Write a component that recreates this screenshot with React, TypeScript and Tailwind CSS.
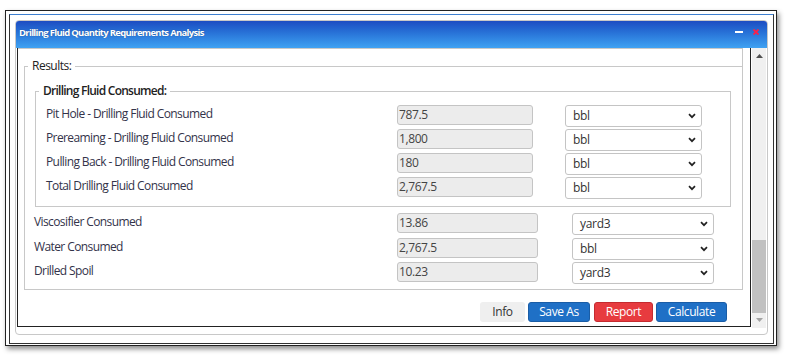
import React from "react";

function Chevron() {
  return (
    <svg width="8" height="6" viewBox="0 0 8 6" className="shrink-0">
      <path d="M1 1.2 L4 4.2 L7 1.2" fill="none" stroke="#222" strokeWidth="1.7" />
    </svg>
  );
}

function ValueBox({ value, w }: { value: string; w: string }) {
  return (
    <div className={`${w} h-[20px] shrink-0 rounded-[3px] border border-[#c4c4c4] bg-[#ececec] pl-[1px] text-[12px] leading-[17px] text-[#444] tracking-[-0.4px]`}>
      {value}
    </div>
  );
}

function UnitBox({ unit, w }: { unit: string; w: string }) {
  return (
    <div className={`${w} h-[22px] shrink-0 rounded-[3px] border border-[#c4c4c4] bg-white pl-[7px] pr-[5px] flex items-center justify-between text-[12px] text-[#333] tracking-[-0.3px]`}>
      <span className="leading-[18px]">{unit}</span>
      <Chevron />
    </div>
  );
}

function InnerRow({ label, value, unit }: { label: string; value: string; unit: string }) {
  return (
    <div className="flex items-start h-[24px]">
      <div className="w-[351px] shrink-0 h-[20px] leading-[18px] text-[12px] text-[#33334a] tracking-[-0.6px]">{label}</div>
      <ValueBox value={value} w="w-[136px]" />
      <div className="w-[32px] shrink-0" />
      <UnitBox unit={unit} w="w-[137px]" />
    </div>
  );
}

function OuterRow({ label, value, unit, h }: { label: string; value: string; unit: string; h: string }) {
  return (
    <div className={`flex items-start ${h}`}>
      <div className="w-[363px] shrink-0 h-[20px] leading-[18px] text-[12px] text-[#33334a] tracking-[-0.6px]">{label}</div>
      <ValueBox value={value} w="w-[141px]" />
      <div className="w-[34px] shrink-0" />
      <UnitBox unit={unit} w="w-[142px]" />
    </div>
  );
}

function Btn({ children, cls }: { children: React.ReactNode; cls: string }) {
  return (
    <div className={`h-[20px] rounded-[3px] flex items-center justify-center text-[12px] tracking-[-0.4px] ${cls}`}>
      {children}
    </div>
  );
}

export default function App() {
  return (
    <div className="w-[787px] h-[357px] bg-white font-['Open_Sans',sans-serif] pt-[10px] pl-[5px]">
      <div className="w-[772px] h-[336px] border border-[#222] pt-[3px] pl-[3px] pr-[2px] pb-[1px] shadow-[2px_3px_5px_rgba(0,0,0,0.45)] bg-white">
        <div className="h-full border border-[#333] border-t-[#3d7fd0] pl-[5px] pt-[5px]">
          <div className="w-[753px] h-[315px] border border-[#c8c8c8] rounded-[4px] bg-white flex flex-col">
            {/* header */}
            <div className="h-[27px] shrink-0 rounded-t-[3px] bg-linear-to-b from-[#1d4cc2] to-[#40a2f2] flex items-start justify-between pl-[3px] pr-[8px] pt-[5px]">
              <span className="text-white font-bold text-[9.5px] leading-[14px] tracking-[-0.7px] [text-shadow:0_0_1px_rgba(0,0,0,0.4)]">
                Drilling Fluid Quantity Requirements Analysis
              </span>
              <div className="flex items-center gap-[10px] pt-[3px]">
                <div className="w-[8px] h-[2px] bg-white" />
                <svg width="6" height="6" viewBox="0 0 6 6">
                  <path d="M0.5 0.5 L5.5 5.5 M5.5 0.5 L0.5 5.5" stroke="#ff1e46" strokeWidth="1.8" />
                </svg>
              </div>
            </div>
            {/* body */}
            <div className="flex items-start">
              {/* panel */}
              <div className="ml-[1px] w-[734px] border-l border-r border-b border-[#222]">
                <div className="mr-[7px] border-t border-r border-[#c8c8c8]">
                  <fieldset className="mt-[9px] ml-[6px] border border-r-0 border-[#c8c8c8] pl-[3px] pb-[3px]">
                    <legend className="px-[4px] text-[12px] leading-[16px] font-medium text-[#222] tracking-[-0.5px]">Results:</legend>
                    <fieldset className="mt-[9px] ml-[7px] mr-[11px] border border-[#c8c8c8] pl-[3px] pb-[5px]">
                      <legend className="px-[4px] text-[12px] leading-[16px] font-semibold text-[#222] tracking-[-0.75px]">Drilling Fluid Consumed:</legend>
                      <div className="pl-[7px] pt-[6px] flex flex-col">
                        <InnerRow label="Pit Hole - Drilling Fluid Consumed" value="787.5" unit="bbl" />
                        <InnerRow label="Prereaming - Drilling Fluid Consumed" value="1,800" unit="bbl" />
                        <InnerRow label="Pulling Back - Drilling Fluid Consumed" value="180" unit="bbl" />
                        <InnerRow label="Total Drilling Fluid Consumed" value="2,767.5" unit="bbl" />
                      </div>
                    </fieldset>
                    <div className="pl-[6px] pt-[6px] flex flex-col">
                      <OuterRow label="Viscosifier Consumed" value="13.86" unit="yard3" h="h-[25px]" />
                      <OuterRow label="Water Consumed" value="2,767.5" unit="bbl" h="h-[24px]" />
                      <OuterRow label="Drilled Spoil" value="10.23" unit="yard3" h="h-[24px]" />
                    </div>
                  </fieldset>
                </div>
                <div className="flex justify-end gap-[3px] pr-[23px] mt-[12px] pb-[4px]">
                  <Btn cls="w-[45px] bg-[#efefef] text-[#333]">Info</Btn>
                  <Btn cls="w-[62px] bg-[#1f70c6] border border-[#1a5da6] text-white">Save As</Btn>
                  <Btn cls="ml-[1px] w-[59px] bg-[#e73b3f] border border-[#c42b30] text-white">Report</Btn>
                  <Btn cls="w-[71px] bg-[#1f70c6] border border-[#1a5da6] text-white">Calculate</Btn>
                </div>
              </div>
              {/* scrollbar */}
              <div className="ml-[1px] w-[14px] h-[280px] bg-[#f0f0f0] flex flex-col">
                <div className="h-[16px] flex items-center justify-center">
                  <svg width="7" height="4" viewBox="0 0 7 4"><path d="M0 4 L3.5 0 L7 4 Z" fill="#505050" /></svg>
                </div>
                <div className="mt-[176px] h-[73px] bg-[#c1c1c1]" />
                <div className="h-[14px] flex items-center justify-center">
                  <svg width="7" height="4" viewBox="0 0 7 4"><path d="M0 0 L3.5 4 L7 0 Z" fill="#a3a3a3" /></svg>
                </div>
              </div>
            </div>
          </div>
        </div>
      </div>
    </div>
  );
}
